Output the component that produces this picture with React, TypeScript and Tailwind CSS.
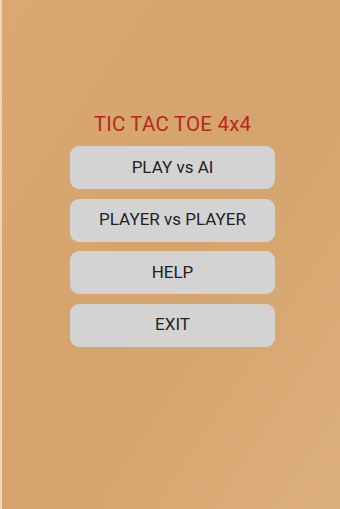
import React from "react";

const items = ["PLAY vs AI", "PLAYER vs PLAYER", "HELP", "EXIT"];

const App = () => {
  return (
    <div className="flex h-[509px] w-[340px] overflow-hidden bg-[#d7a66f] font-['Roboto',sans-serif]">
      <div className="w-[2px] bg-[#e9d6bd]"></div>
      <div className="flex flex-1 flex-col items-center bg-gradient-to-br from-[#d9a971] via-[#d5a46d] to-[#dcae7a] pt-[112px]">
        <h1 className="ml-[3px] text-[20.5px] leading-[24px] tracking-[0.2px] text-[#b8281c]">TIC TAC TOE 4x4</h1>
        <div className="mt-[10px] flex flex-col gap-[9.5px] pl-[3px]">
          {items.map((item) => (
            <button
              key={item}
              className="flex h-[43px] w-[205px] items-center justify-center rounded-[9px] bg-[#d3d3d3] text-[17px] text-[#222222]"
            >
              {item}
            </button>
          ))}
        </div>
      </div>
    </div>
  );
};

export default App;
